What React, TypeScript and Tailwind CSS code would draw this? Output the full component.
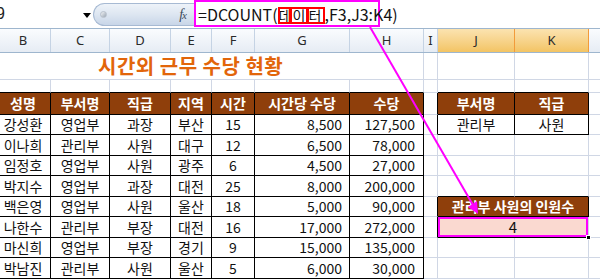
import React from "react";

const FONT = "font-['Noto_Sans_CJK_KR','Noto_Sans',sans-serif]";

const WC = [
  "w-[55px]",
  "w-[59px]",
  "w-[61px]",
  "w-[41px]",
  "w-[43px]",
  "w-[95px]",
  "w-[74px]",
  "w-[14px]",
  "w-[77px]",
  "w-[74px]",
  "w-[60px]",
];
const LETTERS = ["B", "C", "D", "E", "F", "G", "H", "I", "J", "K", ""];

const data = [
  ["강성환", "영업부", "과장", "부산", "15", "8,500", "127,500"],
  ["이나희", "관리부", "사원", "대구", "12", "6,500", "78,000"],
  ["임정호", "영업부", "사원", "광주", "6", "4,500", "27,000"],
  ["박지수", "영업부", "과장", "대전", "25", "8,000", "200,000"],
  ["백은영", "영업부", "사원", "울산", "18", "5,000", "90,000"],
  ["나한수", "관리부", "부장", "대전", "16", "17,000", "272,000"],
  ["마신희", "영업부", "부장", "경기", "9", "15,000", "135,000"],
  ["박남진", "관리부", "사원", "울산", "5", "6,000", "30,000"],
];

const ROWH = [
  "h-[20px]",
  "h-[21px]",
  "h-[20px]",
  "h-[21px]",
  "h-[20px]",
  "h-[21px]",
  "h-[20px]",
  "h-[21px]",
];

type CellProps = {
  w: number;
  r?: "g" | "k";
  b?: "g" | "k";
  className?: string;
  children?: React.ReactNode;
};

function Cell({ w, r = "g", b = "g", className = "", children }: CellProps) {
  const rc = r === "k" ? "border-r-black" : "border-r-[#d0d7e5]";
  const bc = b === "k" ? "border-b-black" : "border-b-[#d0d7e5]";
  return (
    <div
      className={`${WC[w]} shrink-0 h-full border-r border-b ${rc} ${bc} flex items-center overflow-hidden whitespace-nowrap ${className}`}
    >
      {children}
    </div>
  );
}

const TXT = "text-[14px] text-[#111]";

function DataRow({ row, i }: { row: string[]; i: number }) {
  const align = [
    "justify-center",
    "justify-center",
    "justify-center",
    "justify-center",
    "justify-center",
    "justify-end pr-[7px]",
    "justify-end pr-[8px]",
  ];
  let right: React.ReactNode;
  if (i === 0) {
    right = (
      <>
        <Cell w={7} r="k" />
        <Cell w={8} r="k" b="k" className={`justify-center ${TXT}`}>
          관리부
        </Cell>
        <Cell w={9} r="k" b="k" className={`justify-center ${TXT}`}>
          사원
        </Cell>
        <Cell w={10} />
      </>
    );
  } else if (i === 4) {
    right = (
      <>
        <Cell w={7} r="k" />
        <div className="w-[151px] shrink-0 h-full border-r border-b border-black bg-[#8f3f0b] text-white font-bold text-[14px] flex items-center justify-center whitespace-nowrap">
          관리부 사원의 인원수
        </div>
        <Cell w={10} />
      </>
    );
  } else if (i === 5) {
    right = (
      <>
        <Cell w={7} r="k" />
        <div className="relative w-[151px] shrink-0 h-full border-r border-r-[#d0d7e5] border-b border-b-black bg-[#fad9d0] shadow-[inset_0_0_0_2px_#ff00ff] flex items-center justify-center text-[15px] text-[#111]">
          4
          <div className="absolute right-[-3px] bottom-[-3px] w-[5px] h-[5px] bg-black border border-white" />
        </div>
        <Cell w={10} />
      </>
    );
  } else {
    right = (
      <>
        <Cell w={7} />
        <Cell w={8} b={i === 3 ? "k" : "g"} />
        <Cell w={9} b={i === 3 ? "k" : "g"} />
        <Cell w={10} />
      </>
    );
  }
  return (
    <div className={`flex ${ROWH[i]}`}>
      {row.map((v, c) => (
        <Cell key={c} w={c} r="k" b="k" className={`${align[c]} ${TXT}`}>
          {v}
        </Cell>
      ))}
      {right}
    </div>
  );
}

export default function App() {
  const heads = ["성명", "부서명", "직급", "지역", "시간", "시간당 수당", "수당"];
  return (
    <div className={`relative w-[600px] h-[280px] overflow-hidden bg-white ${FONT}`}>
      {/* formula bar */}
      <div className="flex h-[28px] bg-white">
        <div className="relative w-[93px] shrink-0 h-full flex items-center overflow-hidden">
          <span className="ml-[-4px] text-[16px] text-[#222] font-['Liberation_Sans',sans-serif]">9</span>
          <div className="absolute left-[83px] top-[13px] w-0 h-0 border-l-[4px] border-r-[4px] border-t-[5px] border-l-transparent border-r-transparent border-t-black" />
        </div>
        <div className="mt-[3px] w-[101px] h-[23px] shrink-0 rounded-l-full border border-r-0 border-[#a7bad3] bg-gradient-to-b from-[#eef3f9] via-[#dde6f1] to-[#c8d6e8] flex items-center justify-between pl-[6px] pr-[8px]">
          <div className="w-[7px] h-[7px] rounded-full bg-gradient-to-br from-[#f4f6f8] to-[#9aa5b2] border border-[#b7c0cb]" />
          <span className="italic text-[14px] text-[#3d4a5c] font-['Liberation_Serif',serif] tracking-[-1px]">
            f<span className="text-[11px]">x</span>
          </span>
        </div>
        <div className="w-[186px] h-[27px] shrink-0 border-2 border-[#ff00ff] bg-white flex items-center pl-[2px] text-[16px] text-[#111] whitespace-nowrap">
          <span>=DCOUNT(</span>
          <span className="flex items-center mt-[3px] text-[14px] leading-none">
            <span className="w-[13px] h-[17px] border-2 border-[#ff0000] flex items-center justify-start overflow-hidden">
              <span className="ml-[-1px]">데</span>
            </span>
            <span className="w-[18px] h-[17px] ml-[-1px] border-2 border-[#ff0000] flex items-center justify-start overflow-hidden">
              <span className="ml-[1px]">이</span>
            </span>
            <span className="w-[18px] h-[17px] ml-[-1px] border-2 border-[#ff0000] flex items-center justify-start overflow-hidden">
              <span className="ml-[0px]">터</span>
            </span>
          </span>
          <span>,F3,J3:K4)</span>
        </div>
        <div className="flex-1" />
      </div>

      {/* column headers */}
      <div className="flex ml-[-4px] h-[25px] border-t border-b border-[#9eb6ce]">
        {LETTERS.map((l, i) => (
          <div
            key={i}
            className={`${WC[i]} shrink-0 h-full flex items-center justify-center text-[13px] font-['Noto_Sans',sans-serif] border-r ${
              i === 8 || i === 9
                ? "bg-gradient-to-b from-[#fbe3b0] to-[#f3c463] border-r-[#f29b3a] text-[#2a2a2a]"
                : "bg-gradient-to-b from-[#fafcfe] to-[#e6ecf4] border-r-[#c5d3e4] text-[#2a2a2a]"
            }`}
          >
            {l}
          </div>
        ))}
      </div>

      <div className="ml-[-4px]">
        {/* row 1 title */}
        <div className="flex h-[27px]">
          <div className="w-[428px] shrink-0 h-full border-r border-b border-[#d0d7e5] flex items-center pl-[102px]">
            <span className="text-[20px] font-bold text-[#e2650a] tracking-[0.5px] whitespace-nowrap">
              시간외 근무 수당 현황
            </span>
          </div>
          <Cell w={7} />
          <Cell w={8} />
          <Cell w={9} />
          <Cell w={10} />
        </div>
        {/* row 2 */}
        <div className="flex h-[13px]">
          {[0, 1, 2, 3, 4, 5, 6].map((c) => (
            <Cell key={c} w={c} b="k" />
          ))}
          <Cell w={7} />
          <Cell w={8} b="k" />
          <Cell w={9} b="k" />
          <Cell w={10} />
        </div>
        {/* row 3 headers */}
        <div className="flex h-[22px]">
          {heads.map((h, c) => (
            <Cell key={c} w={c} r="k" b="k" className="justify-center bg-[#8f3f0b] text-white font-bold text-[14px]">
              {h}
            </Cell>
          ))}
          <Cell w={7} r="k" />
          <Cell w={8} r="k" b="k" className="justify-center bg-[#8f3f0b] text-white font-bold text-[14px]">
            부서명
          </Cell>
          <Cell w={9} r="k" b="k" className="justify-center bg-[#8f3f0b] text-white font-bold text-[14px]">
            직급
          </Cell>
          <Cell w={10} />
        </div>
        {data.map((row, i) => (
          <DataRow key={i} row={row} i={i} />
        ))}
      </div>

      {/* magenta arrow annotation */}
      <svg className="absolute inset-0 pointer-events-none" width="600" height="280">
        <line x1="370" y1="27" x2="473" y2="205" stroke="#ff00ff" strokeWidth="2" />
        <polygon points="478,214 468,207 477,201" fill="#ff00ff" />
      </svg>
    </div>
  );
}
